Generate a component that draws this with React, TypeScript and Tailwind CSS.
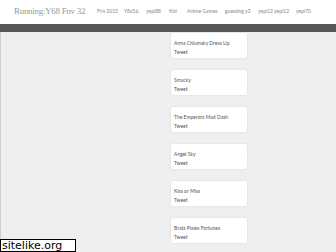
export default function App() {
  const nav = [
    { label: "Friv 2015", w: "w-[27px]" },
    { label: "Y8x56", w: "w-[22px]" },
    { label: "yepi88", w: "w-[23px]" },
    { label: "Kizi", w: "w-[18px]" },
    { label: "Anime Games", w: "w-[38px]" },
    { label: "guessing y3", w: "w-[33px]" },
    { label: "yepi12 yepi12", w: "w-[38px]" },
    { label: "yepi70", w: "w-[30px]" },
  ];
  const games = [
    "Anna Chlumsky Dress Up",
    "Smacky",
    "The Emperors Mad Dash",
    "Angel Sky",
    "Kiss or Miss",
    "Bratz Pixies Fortunes",
  ];

  return (
    <div className="relative w-[336px] h-[252px] overflow-hidden bg-[#efefef] font-['Lato',sans-serif]">
      <header className="h-[24px] bg-white flex items-center pl-[14px]">
        <span className="inline-block shrink-0 w-[83px] font-['Liberation_Serif',serif] text-[9px] tracking-[-0.3px] text-[#999] whitespace-nowrap">
          Running:Y68 Fnv 32
        </span>
        <nav className="flex text-[5px] text-[#888] whitespace-nowrap">
          {nav.map((n) => (
            <span key={n.label} className={`${n.w} shrink-0`}>
              {n.label}
            </span>
          ))}
        </nav>
      </header>
      <div className="h-[8px] bg-[#575757]" />
      <div className="flex h-full border-l border-[#cfcfcf]">
        <div className="ml-[170px] w-[76px] flex flex-col gap-[12px] pt-[1px]">
          {games.map((g) => (
            <div
              key={g}
              className="h-[25px] bg-white rounded-[2px] shadow-[0_0_2px_rgba(0,0,0,0.12)] px-[3px] pt-[6px] text-[5px] leading-[9px] text-[#555] whitespace-nowrap"
            >
              <div>{g}</div>
              <div>Tweet</div>
            </div>
          ))}
        </div>
      </div>
      <div className="absolute left-0 bottom-0 w-[76px] h-[13px] bg-white border border-black font-['DejaVu_Sans',sans-serif] text-[11px] leading-[11px] text-black px-[1px]">
        sitelike.org
      </div>
    </div>
  );
}
